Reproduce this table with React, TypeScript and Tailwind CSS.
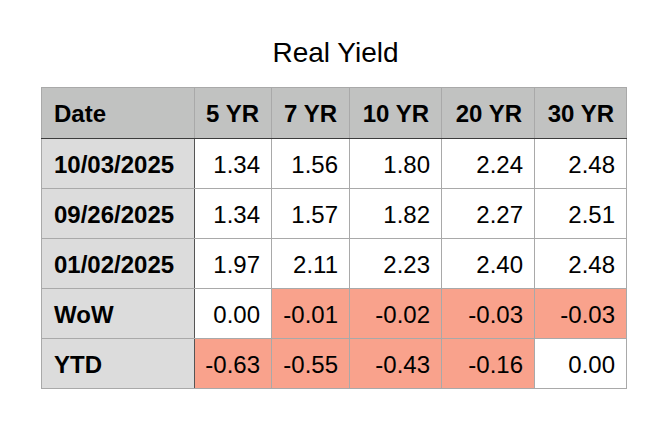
import React from 'react';

type Row = { label: string; values: string[]; hot?: boolean[] };

const headers = ['5 YR', '7 YR', '10 YR', '20 YR', '30 YR'];
const colWidths = ['w-[153px]', 'w-[77px]', 'w-[78px]', 'w-[92px]', 'w-[93px]', 'w-[92px]'];

const rows: Row[] = [
  { label: '10/03/2025', values: ['1.34', '1.56', '1.80', '2.24', '2.48'] },
  { label: '09/26/2025', values: ['1.34', '1.57', '1.82', '2.27', '2.51'] },
  { label: '01/02/2025', values: ['1.97', '2.11', '2.23', '2.40', '2.48'] },
  {
    label: 'WoW',
    values: ['0.00', '-0.01', '-0.02', '-0.03', '-0.03'],
    hot: [false, true, true, true, true],
  },
  {
    label: 'YTD',
    values: ['-0.63', '-0.55', '-0.43', '-0.16', '0.00'],
    hot: [true, true, true, true, false],
  },
];

export default function App() {
  return (
    <div
      className="w-[662px] h-[430px] bg-white text-black flex flex-col items-center"
      style={{ fontFamily: '"Liberation Sans", Arial, Helvetica, sans-serif' }}
    >
      <h1 className="mt-[37px] ml-[9px] h-[32px] text-[28px] leading-[32px] font-normal">Real Yield</h1>

      <table className="mt-[18px] ml-[6px] border-collapse table-fixed text-[24px] leading-[28px]">
        <colgroup>
          {colWidths.map((w, i) => (
            <col key={i} className={w} />
          ))}
        </colgroup>
        <thead>
          <tr className="h-[51px] bg-[#c1c2c1]">
            <th className="border border-[#a9a9a9] border-b-[#3c3c3c] text-left pl-3 pt-[2px] font-bold">
              Date
            </th>
            {headers.map((h) => (
              <th
                key={h}
                className="border border-[#a9a9a9] border-b-[#3c3c3c] text-right pr-3 pt-[2px] font-bold"
              >
                {h}
              </th>
            ))}
          </tr>
        </thead>
        <tbody>
          {rows.map((r) => (
            <tr key={r.label} className="h-[50px]">
              <td className="border border-[#a9a9a9] border-r-[#555555] bg-[#dcdcdc] pl-3 pt-[3px] font-bold">
                {r.label}
              </td>
              {r.values.map((v, i) => (
                <td
                  key={i}
                  className={
                    'border border-[#a9a9a9] text-right pr-[11px] pt-[3px] ' +
                    (r.hot?.[i] ? 'bg-[#f9a28c]' : 'bg-white')
                  }
                >
                  {v}
                </td>
              ))}
            </tr>
          ))}
        </tbody>
      </table>
    </div>
  );
}
